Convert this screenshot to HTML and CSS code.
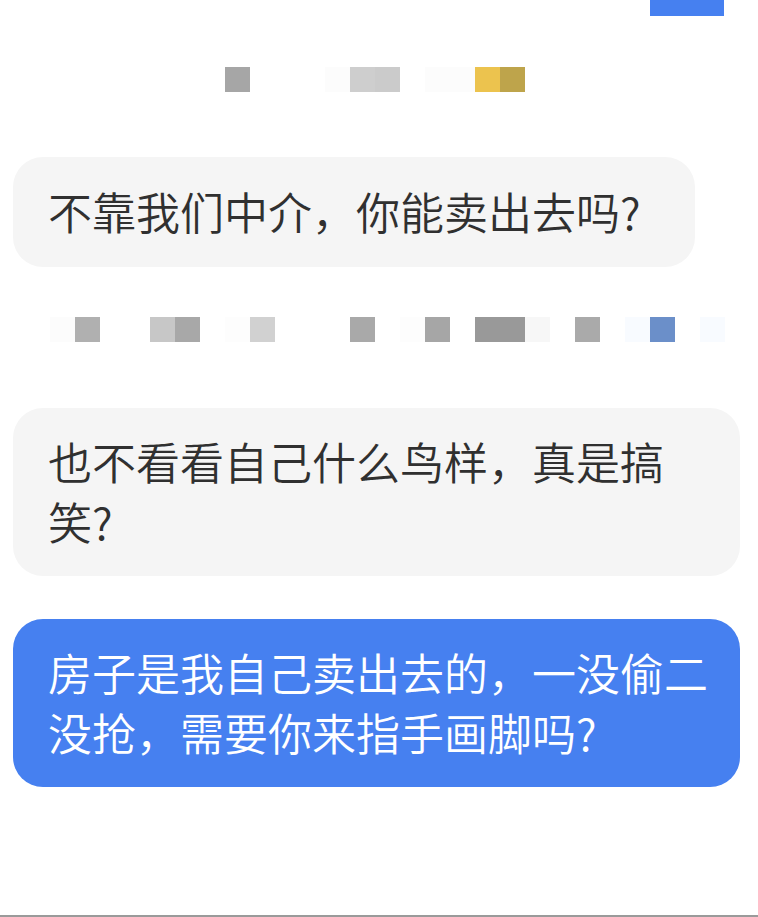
FILE: index.html
```html
<!DOCTYPE html>
<html lang="zh-CN">
<head>
<meta charset="utf-8">
<title>聊天</title>
<link rel="stylesheet" href="styles.css">
</head>
<body>
<div class="page">
  <div class="topbar"><span class="top-tab"></span></div>

  <div class="mosaic mosaic-1">
    <span></span><span></span><span></span><span></span><span></span><span></span><span></span><span></span><span></span>
    <span class="m-a6"></span><span></span><span></span><span></span>
    <span class="m-fd"></span><span class="m-ce"></span><span class="m-cb"></span><span></span>
    <span class="m-fd"></span><span class="m-fd"></span>
    <span class="m-yel"></span><span class="m-ochre"></span>
  </div>

  <div class="bubble bubble-in bubble-short">不靠我们中介，你能卖出去吗?</div>

  <div class="mosaic mosaic-2">
    <span></span><span></span>
    <span class="m-fd"></span><span class="m-b0"></span><span></span><span></span>
    <span class="m-c7"></span><span class="m-a8"></span><span></span>
    <span class="m-fe"></span><span class="m-d1"></span><span></span><span></span><span></span>
    <span class="m-a9"></span><span></span><span class="m-fe"></span><span class="m-a6"></span><span></span>
    <span class="m-99"></span><span class="m-99"></span><span class="m-f7"></span><span></span>
    <span class="m-aa"></span><span></span><span class="m-fblue"></span><span class="m-blue"></span><span></span><span class="m-fblue"></span>
  </div>

  <div class="bubble bubble-in bubble-wide">也不看看自己什么鸟样，真是搞<br>笑?</div>

  <div class="bubble bubble-out bubble-wide">房子是我自己卖出去的，一没偷二<br>没抢，需要你来指手画脚吗?</div>
</div>
</body>
</html>
```

FILE: styles.css
```css
* { box-sizing: border-box; }

html, body {
  margin: 0;
  padding: 0;
  background: #ffffff;
}

body {
  font-family: "Noto Sans CJK SC", "Noto Sans", sans-serif;
  width: 758px;
  height: 917px;
  overflow: hidden;
}

.page {
  height: 917px;
  display: flex;
  flex-direction: column;
  border-bottom: 2px solid #9a9a9a;
}

.topbar {
  height: 16px;
  display: flex;
  justify-content: flex-end;
  padding-right: 34px;
}

.top-tab {
  width: 74px;
  height: 16px;
  background: #4680f0;
}

.mosaic {
  display: flex;
  height: 25px;
}

.mosaic span {
  flex: 0 0 25px;
  height: 25px;
}

.mosaic-1 { margin-top: 51px; }
.mosaic-2 { margin-top: 50px; }

.m-a6 { background: #a6a6a6; }
.m-fd { background: #fcfcfc; }
.m-fe { background: #fdfdfd; }
.m-ce { background: #cecece; }
.m-cb { background: #cbcbcb; }
.m-c7 { background: #c7c7c7; }
.m-a8 { background: #a8a8a8; }
.m-a9 { background: #a9a9a9; }
.m-aa { background: #aaaaaa; }
.m-b0 { background: #b0b0b0; }
.m-d1 { background: #d1d1d1; }
.m-99 { background: #999999; }
.m-f7 { background: #f7f7f7; }
.m-yel { background: #ecc34e; }
.m-ochre { background: #bea44b; }
.m-blue { background: #6b8fc9; }
.m-fblue { background: #f8fbff; }

.bubble {
  margin-left: 13px;
  border-radius: 30px;
  font-size: 44px;
  font-weight: 350;
  line-height: 60px;
  white-space: nowrap;
  padding: 23px 35px 25px;
}

.bubble-in {
  background: #f5f5f5;
  color: #303030;
}

.bubble-out {
  background: #4680f0;
  color: #ffffff;
  margin-top: 43px;
}

.bubble-short {
  width: 682px;
  padding-top: 24px;
  padding-bottom: 26px;
  margin-top: 65px;
}

.bubble-wide {
  width: 727px;
}

.mosaic-2 + .bubble {
  margin-top: 66px;
}
```
